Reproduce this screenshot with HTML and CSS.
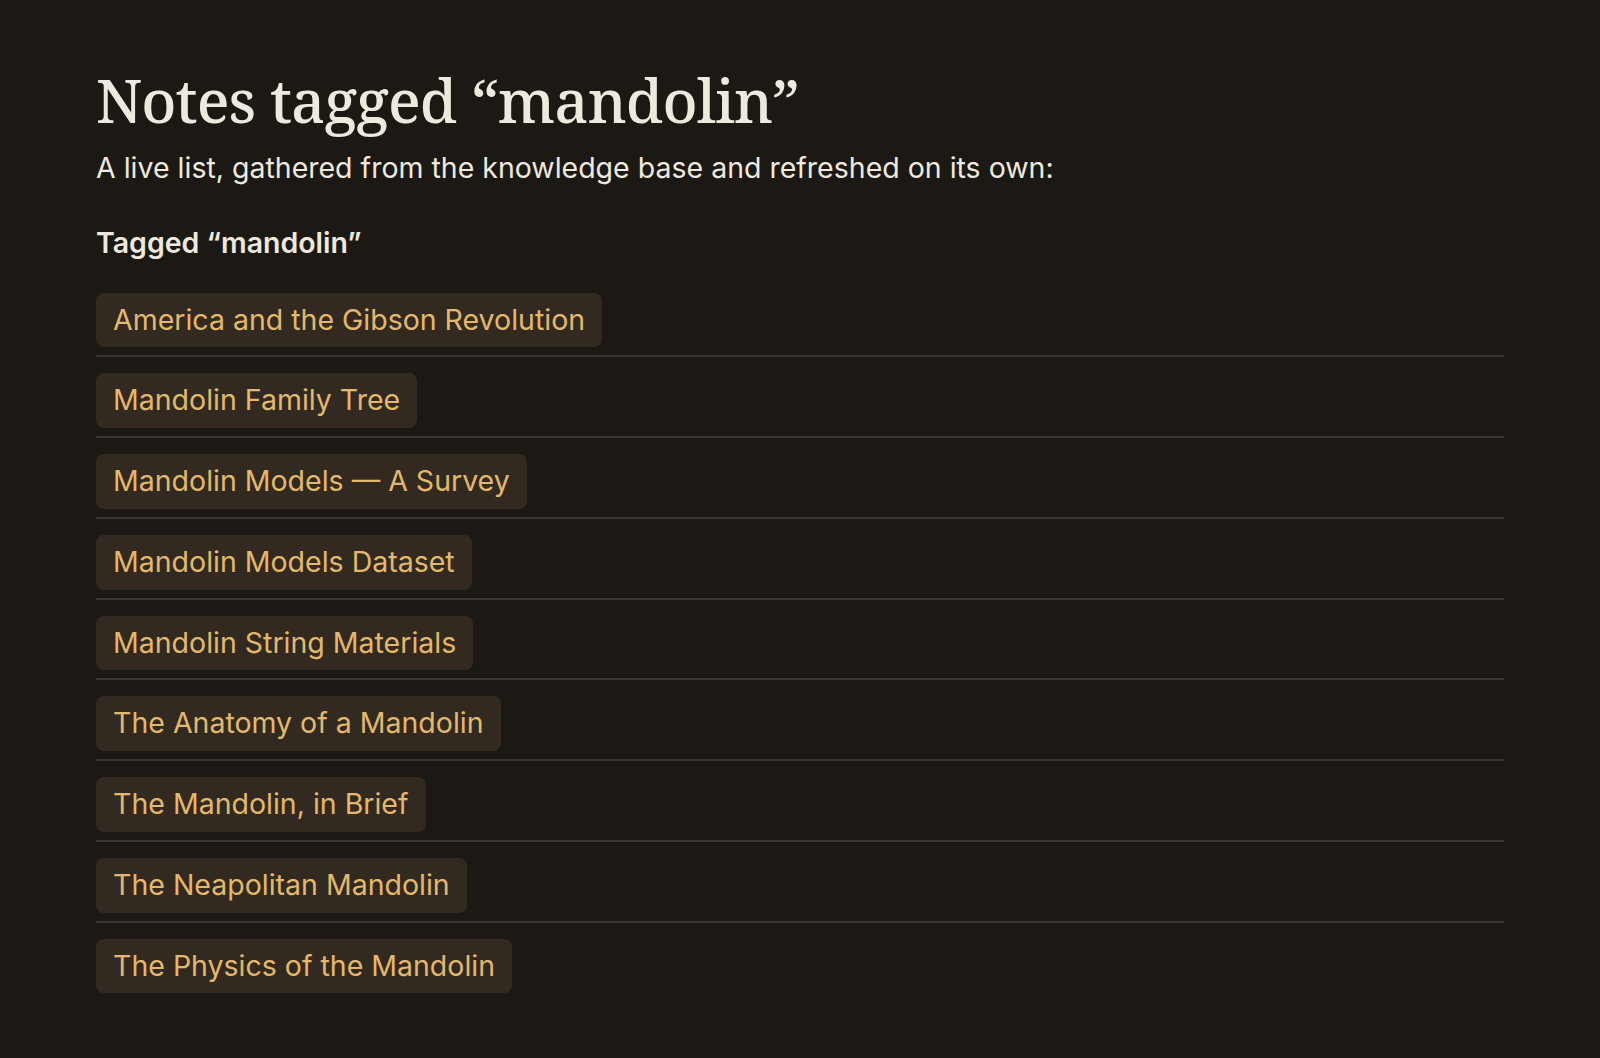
FILE: index.html
```html
<!DOCTYPE html>
<html lang="en">
<head>
  <meta charset="UTF-8" />
  <meta name="viewport" content="width=device-width, initial-scale=1.0"/>
  <title>Notes tagged “mandolin”</title>
  <link rel="stylesheet" href="styles.css">
</head>
<body>
  <main class="page">
    <h1>Notes tagged “mandolin”</h1>
    <p class="lead">A live list, gathered from the knowledge base and refreshed on its own:</p>

    <section class="tag-list">
      <h2>Tagged “mandolin”</h2>
      <ul>
        <li><a href="#" class="note-link">America and the Gibson Revolution</a></li>
        <li><a href="#" class="note-link">Mandolin Family Tree</a></li>
        <li><a href="#" class="note-link">Mandolin Models — A Survey</a></li>
        <li><a href="#" class="note-link">Mandolin Models Dataset</a></li>
        <li><a href="#" class="note-link">Mandolin String Materials</a></li>
        <li><a href="#" class="note-link">The Anatomy of a Mandolin</a></li>
        <li><a href="#" class="note-link">The Mandolin, in Brief</a></li>
        <li><a href="#" class="note-link">The Neapolitan Mandolin</a></li>
        <li><a href="#" class="note-link">The Physics of the Mandolin</a></li>
      </ul>
    </section>
  </main>
</body>
</html>
```

FILE: styles.css
```css
* { box-sizing: border-box; margin: 0; padding: 0; }

body {
  font-family: Inter, "Noto Sans", sans-serif;
  font-size: 28.5px;
  line-height: 1.5;
  background-color: #1c1814;
  color: #ede9df;
}

.page {
  padding: 64px 96px 40px;
}

h1 {
  font-family: "Noto Serif", "Liberation Serif", serif;
  font-size: 60px;
  font-weight: 500;
  line-height: 72px;
  letter-spacing: -0.9px;
}

.lead {
  margin-top: 11px;
}

.tag-list {
  margin-top: 32px;
}

.tag-list h2 {
  font-size: 28.5px;
  font-weight: 600;
  line-height: 1.5;
}

.tag-list ul {
  list-style: none;
  margin-top: 13px;
}

.tag-list li {
  padding: 16px 0 8px;
  border-bottom: 2px solid #3a3631;
}

.tag-list li:first-child {
  padding-top: 15px;
}

.tag-list li:last-child {
  border-bottom: none;
}

.note-link {
  display: inline-block;
  padding: 6px 17px;
  background-color: #322a20;
  color: #e3b86c;
  border-radius: 8px;
  text-decoration: none;
}

.note-link:hover {
  background-color: #3d3326;
}
```
